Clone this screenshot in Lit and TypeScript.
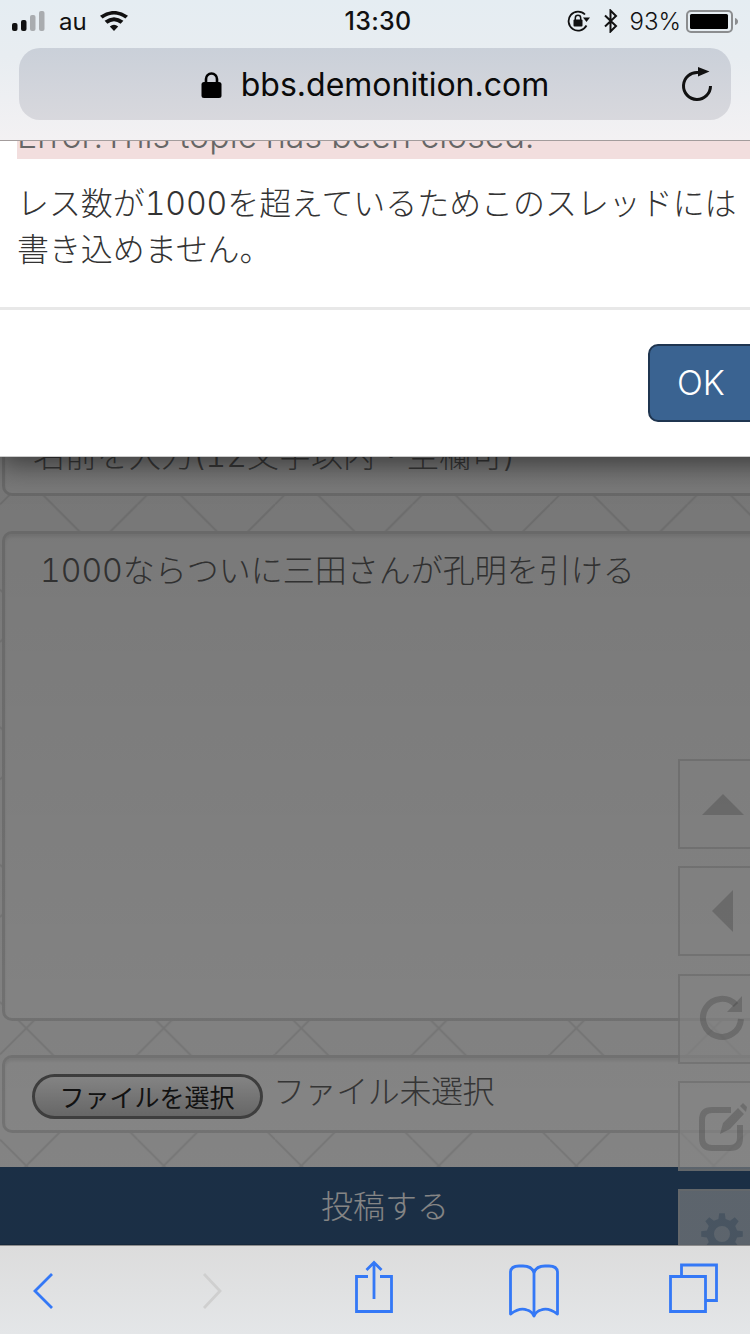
import { LitElement, html, css, svg } from "lit";
import { customElement } from "lit/decorators.js";

function gearPath(cx: number, cy: number, teeth: number, outer: number, root: number, hole: number): string {
  const step = (Math.PI * 2) / teeth;
  const pts: string[] = [];
  for (let i = 0; i < teeth; i++) {
    const a = i * step - Math.PI / 2;
    const at = (r: number, d: number) =>
      `${(cx + r * Math.cos(a + d)).toFixed(2)} ${(cy + r * Math.sin(a + d)).toFixed(2)}`;
    pts.push(at(root, -step * 0.3), at(outer, -step * 0.17), at(outer, step * 0.17), at(root, step * 0.3));
  }
  return `M${pts.join("L")}Z M${cx - hole} ${cy}a${hole} ${hole} 0 1 0 ${hole * 2} 0a${hole} ${hole} 0 1 0 ${-hole * 2} 0Z`;
}

@customElement("app-root")
export class AppRoot extends LitElement {
  static styles = css`
    :host {
      display: block;
      position: relative;
      width: 750px;
      height: 1334px;
      overflow: hidden;
      background: #fcfcfc;
      font-family: "Inter", "Noto Sans CJK JP", sans-serif;
    }
    * { box-sizing: border-box; }
    .pattern { position: absolute; inset: 0; width: 750px; height: 1334px; }
    .page {
      position: relative;
      display: flex;
      flex-direction: column;
      padding-top: 400px;
      font-family: "Inter", "Noto Sans CJK JP", "Noto Sans CJK SC", sans-serif;
      font-weight: 300;
      color: #666;
      font-size: 32px;
      font-variant-numeric: tabular-nums;
    }
    .field {
      margin-left: 2px;
      width: 790px;
      border: 3px solid #dcdcdc;
      border-radius: 10px;
      background: #ffffff;
      box-shadow: inset 0 3px 3px rgba(0,0,0,.08);
    }
    .name { height: 96px; padding: 31px 0 0 28px; line-height: 44px; margin-bottom: 35px; color: #777; }
    .area { height: 490px; padding: 12px 0 0 35px; line-height: 50px; margin-bottom: 34px; }
    .file {
      height: 78px;
      display: flex;
      align-items: flex-start;
      gap: 10px;
      padding: 13px 0 0 27px;
      margin-bottom: 34px;
    }
    .file-btn {
      flex: none;
      width: 231px;
      height: 45px;
      border: 3px solid #777;
      border-radius: 23px;
      background: linear-gradient(#fff, #c6c6c6);
      color: #222;
      font-size: 25px;
      line-height: 38px;
      text-align: center;
      font-weight: 400;
      font-family: "Noto Sans CJK JP", sans-serif;
      margin-top: 3px;
      padding-right: 1px;
    }
    .file-label { line-height: 40px; margin-top: 1px; letter-spacing: -.4px; }
    .submit {
      height: 79px;
      background: #335a85;
      color: #fff;
      text-align: center;
      line-height: 80px;
      font-size: 32px;
      padding-left: 20px;
      border-bottom: 2px solid #2b4d73;
    }
    .rail {
      position: absolute;
      top: 759px;
      left: 678px;
      display: flex;
      flex-direction: column;
      gap: 17.4px;
    }
    .rail-btn {
      width: 90px;
      height: 90px;
      border: 2px solid rgba(200,200,200,.55);
      background: rgba(255,255,255,.62);
      flex: none;
    }
    .rail-btn svg { display: block; width: 86px; height: 86px; fill: rgba(110,110,110,.3); }
    .rail-btn .line { fill: none; stroke: rgba(110,110,110,.3); stroke-width: 6; }
    .rail-btn .gear { fill: rgba(60,100,140,.32); }
    .overlay {
      position: absolute;
      inset: 0;
      background: linear-gradient(rgba(0,0,0,.53) 460px, rgba(0,0,0,.48) 1170px);
    }
    .modal {
      position: absolute;
      top: 141px;
      left: 0;
      width: 790px;
      height: 316px;
      background: #fff;
      box-shadow: 0 8px 26px rgba(0,0,0,.5);
      border-bottom: 1px solid #ccc;
      font-family: "Inter", "Noto Sans CJK JP", "Noto Sans CJK SC", sans-serif;
      font-weight: 300;
      color: #333;
      display: flex;
      flex-direction: column;
      font-variant-numeric: tabular-nums;
    }
    .alert {
      margin: -27px 0 0 17px;
      height: 45px;
      background: #f2dede;
      color: #666;
      font-size: 34px;
      line-height: 44px;
      white-space: nowrap;
    }
    .body {
      margin: 22px 0 0 17px;
      width: 730px;
      font-size: 32px;
      line-height: 46px;
      height: 126px;
      letter-spacing: -.07px;
    }
    .rule { height: 3px; background: #e8e8e8; flex: none; }
    .foot { flex: 1; padding: 34px 0 0 648px; }
    .ok {
      width: 120px;
      height: 78px;
      background: #3a6391;
      border: 2px solid #1f3550;
      border-radius: 10px;
      color: #fff;
      font-family: "Inter", sans-serif;
      font-weight: 300;
      font-size: 34px;
      line-height: 74px;
      padding-left: 27px;
    }
    .top {
      position: absolute;
      top: 0; left: 0; right: 0;
      height: 141px;
      background: linear-gradient(#e5edf2 0, #e8edf1 40%, #f3f1f3 100%);
      border-bottom: 1px solid #a39c9c;
    }
    .status {
      height: 48px;
      position: relative;
      display: flex;
      align-items: center;
      font-size: 24px;
      color: #111;
      padding: 0 11px 6px 12px;
    }
    .signal { width: 33px; height: 20px; flex: none; }
    .carrier { margin-left: 14px; }
    .wifi { width: 28px; height: 20px; margin-left: 13px; flex: none; }
    .time {
      position: absolute;
      left: 6px; right: 0; top: 6px;
      text-align: center;
      font-size: 25px;
      line-height: 30px;
      font-weight: 500;
      letter-spacing: .3px;
    }
    .right { margin-left: auto; display: flex; align-items: center; }
    .rot { width: 24px; height: 22px; flex: none; }
    .bt { width: 16px; height: 24px; margin-left: 12px; flex: none; }
    .pct { margin-left: 11px; font-weight: 300; }
    .batt { width: 53px; height: 23px; margin-left: 5px; flex: none; }
    .url {
      margin: 0 19px;
      height: 72px;
      border-radius: 21px;
      background: linear-gradient(#cad0d9, #d8d8dd);
      position: relative;
      display: flex;
      align-items: center;
      justify-content: center;
      gap: 19px;
      font-size: 32px;
      color: #0a0a0a;
    }
    .lock { width: 21px; height: 27px; flex: none; margin-top: 1px; }
    .reload { position: absolute; right: 18px; top: 17px; width: 32px; height: 38px; }
    .bottom {
      position: absolute;
      left: 0; right: 0; bottom: 0;
      height: 89px;
      background: linear-gradient(#dcdcdc, #e4e6e8);
      border-top: 1px solid #8d8d8d;
      display: flex;
    }
    .bottom svg { position: absolute; left: 0; top: -1px; width: 750px; height: 89px; fill: none; stroke: #3478f6; stroke-width: 2.8; }
    .bottom .off { stroke: #cfcfcf; }
  `;

  render() {
    return html`
      <svg class="pattern" viewBox="0 0 750 1334" aria-hidden="true">
        <defs>
          <pattern id="diamond" width="137.5" height="137.5" patternUnits="userSpaceOnUse">
            <path d="M98 0 137.5 39.5M0 39.5 98 137.5M92 0 0 92M137.5 92 92 137.5" stroke="#e4e4e4" stroke-width="2" fill="none" />
          </pattern>
        </defs>
        <rect width="750" height="1334" fill="url(#diamond)" />
      </svg>

      <main class="page">
        <div class="field name">名前を入力(12文字以内・空欄可)</div>
        <div class="field area">1000ならついに三田さんが孔明を引ける</div>
        <div class="field file">
          <div class="file-btn">ファイルを選択</div>
          <div class="file-label">ファイル未選択</div>
        </div>
        <div class="submit">投稿する</div>
      </main>

      <div class="rail">
        <div class="rail-btn">
          <svg viewBox="0 0 86 86"><path d="M22 54 43 33 64 54Z" /></svg>
        </div>
        <div class="rail-btn">
          <svg viewBox="0 0 86 86"><path d="M32 43 53 22V64Z" /></svg>
        </div>
        <div class="rail-btn">
          <svg viewBox="0 0 86 86">
            <path class="line" d="M56 29A19 19 0 1 0 61 43" />
            <path d="M62 20V36H47Z" />
          </svg>
        </div>
        <div class="rail-btn">
          <svg viewBox="0 0 86 86">
            <path class="line" d="M51 27H32Q22 27 22 37V55Q22 65 32 65H50Q60 65 60 55V42" />
            <path d="M40 51 43 40 58 25 64 31 50 46ZM60 23 63 20 67 24 66 29Z" />
          </svg>
        </div>
        <div class="rail-btn">
          <svg viewBox="0 0 86 86">
            <path class="gear" fill-rule="evenodd" d=${gearPath(42, 43, 8, 21, 15.5, 8)} />
          </svg>
        </div>
      </div>

      <div class="overlay"></div>

      <section class="modal">
        <div class="alert">Error:This topic has been closed.</div>
        <div class="body">レス数が1000を超えているためこのスレッドには書き込めません。</div>
        <div class="rule"></div>
        <div class="foot"><div class="ok">OK</div></div>
      </section>

      <header class="top">
        <div class="status">
          <svg class="signal" viewBox="0 0 33 20">
            <rect x="0" y="12" width="5.5" height="8" rx="2" fill="#111" />
            <rect x="9" y="9" width="5.5" height="11" rx="2" fill="#111" />
            <rect x="18" y="4" width="5.5" height="16" rx="2" fill="#a9acaf" />
            <rect x="27" y="0" width="5.5" height="20" rx="2" fill="#a9acaf" />
          </svg>
          <span class="carrier">au</span>
          <svg class="wifi" viewBox="0 0 28 20">
            <path d="M14 20 9.8 15.4Q14 12 18.2 15.4ZM7.4 12.8 4.6 9.8Q14 2.8 23.4 9.8L20.6 12.8Q14 7.6 7.4 12.8ZM2.6 7.6 0 4.8Q14 -5 28 4.8L25.4 7.6Q14 -.6 2.6 7.6Z" fill="#111" />
          </svg>
          <span class="time">13:30</span>
          <div class="right">
            <svg class="rot" viewBox="0 0 24 22">
              <path d="M19.5 15.5A9.5 9.5 0 1 1 18 4.5" fill="none" stroke="#111" stroke-width="1.8" />
              <path d="M16 7.5H23L19.5 12Z" fill="#111" />
              <rect x="6.5" y="9.5" width="9" height="7" rx="1" fill="#111" />
              <path d="M8.3 10V8A2.7 2.7 0 0 1 13.7 8V10" fill="none" stroke="#111" stroke-width="1.5" />
            </svg>
            <svg class="bt" viewBox="0 0 16 24">
              <path d="M2 6.5 13 17 7.5 22.5V1.5L13 7 2 17.5" fill="none" stroke="#111" stroke-width="2" />
            </svg>
            <span class="pct">93%</span>
            <svg class="batt" viewBox="0 0 53 23">
              <rect x="1" y="1" width="45" height="21" rx="4" fill="none" stroke="#8b8d8f" stroke-width="2" />
              <rect x="4" y="4" width="38" height="15" rx="1.5" fill="#000" />
              <path d="M49 8Q52 9 52 11.5Q52 14 49 15Z" fill="#8b8d8f" />
            </svg>
          </div>
        </div>
        <div class="url">
          <svg class="lock" viewBox="0 0 21 27">
            <path d="M5 13V8A5.5 5.5 0 0 1 16 8V13" fill="none" stroke="#000" stroke-width="2.6" />
            <rect x="0.5" y="11" width="20" height="16" rx="2.5" fill="#000" />
          </svg>
          <span>bbs.demonition.com</span>
          <svg class="reload" viewBox="0 0 32 38">
            <path d="M17 7.5A13.5 13.5 0 1 0 29.5 21" fill="none" stroke="#111" stroke-width="3" />
            <path d="M17 2 28.5 6.5 17 11.5Z" fill="#111" />
          </svg>
        </div>
      </header>

      <footer class="bottom">
        <svg viewBox="0 0 750 89">
          ${svg`
            <path d="M52 29 35 46 52 63" />
            <path class="off" d="M204 29 220 46 204 63" />
            <path d="M368 31.5H356.5V66.5H391.5V31.5H380M374 54V17M366.5 25 374 17.5 381.5 25" />
            <path d="M534 24V70M510.5 69V27Q511 21 519 21H523Q532 21 534 28Q536 21 545 21H549Q557 21 557.5 27V69Q548 62 541 65 536.5 66 534 71 531.5 66 527 65 520 62 510.5 69Z" stroke-linejoin="round" />
            <path d="M670.5 31.5H705.5V66.5H670.5ZM681.5 31V20H716.5V55.5H706" />
          `}
        </svg>
      </footer>
    `;
  }
}
